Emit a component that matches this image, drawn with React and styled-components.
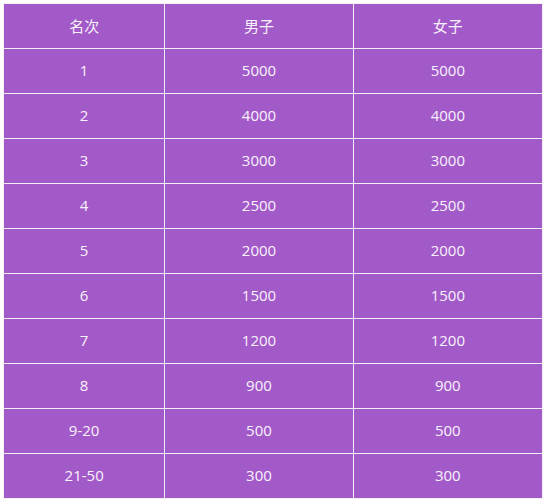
import React from 'react';
import styled, { createGlobalStyle } from 'styled-components';

const GlobalStyle = createGlobalStyle`
  body {
    margin: 0;
    background: #fff;
    font-family: "Open Sans", "Noto Sans CJK SC", sans-serif;
  }
`;

const rows = [
  ['1', '5000', '5000'],
  ['2', '4000', '4000'],
  ['3', '3000', '3000'],
  ['4', '2500', '2500'],
  ['5', '2000', '2000'],
  ['6', '1500', '1500'],
  ['7', '1200', '1200'],
  ['8', '900', '900'],
  ['9-20', '500', '500'],
  ['21-50', '300', '300'],
];

export default function App() {
  return (
    <Wrap>
      <GlobalStyle />
      <Table>
        <colgroup>
          <col style={{ width: 161 }} />
          <col style={{ width: 188 }} />
          <col style={{ width: 189 }} />
        </colgroup>
        <thead>
          <tr>
            <Cell as="th">名次</Cell>
            <Cell as="th">男子</Cell>
            <Cell as="th">女子</Cell>
          </tr>
        </thead>
        <tbody>
          {rows.map((r) => (
            <tr key={r[0]}>
              {r.map((v, i) => (
                <Cell key={i}>{v}</Cell>
              ))}
            </tr>
          ))}
        </tbody>
      </Table>
    </Wrap>
  );
}

const Wrap = styled.div`
  padding: 3px 0 0 3px;
`;

const Table = styled.table`
  width: 540px;
  border-collapse: collapse;
  table-layout: fixed;
  background: #a35ac9;
`;

const Cell = styled.td`
  height: 42px;
  padding: 0 0 2px;
  border: 1px solid #f4eef8;
  text-align: center;
  vertical-align: middle;
  color: #f8f2fa;
  font-size: 15px;
  font-weight: normal;
`;
